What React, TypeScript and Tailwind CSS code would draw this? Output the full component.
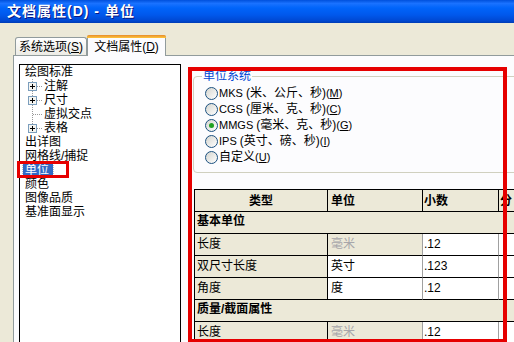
import React from "react";

const FONT = "font-['Liberation_Sans','Noto_Sans_CJK_SC',sans-serif]";

function Gutter({ plus, last }: { plus?: boolean; last?: boolean }) {
  return (
    <svg width="19" height="14" className="shrink-0 block">
      <line x1="7.5" y1="0" x2="7.5" y2={last ? 7.5 : 14} stroke="#9A9A9A" strokeDasharray="1 1" />
      <line x1="8" y1="7.5" x2="18" y2="7.5" stroke="#9A9A9A" strokeDasharray="1 1" />
      {plus && (
        <g shapeRendering="crispEdges">
          <rect x="3.5" y="3.5" width="8" height="8" fill="#F4F4F0" stroke="#7B9EBD" />
          <line x1="5" y1="7.5" x2="10" y2="7.5" stroke="#000" />
          <line x1="7.5" y1="5" x2="7.5" y2="10" stroke="#000" />
        </g>
      )}
    </svg>
  );
}

function U({ c }: { c: string }) {
  return <span className="underline underline-offset-[1px]">{c}</span>;
}

function L({ children }: { children: React.ReactNode }) {
  return <span className="text-[11px]">{children}</span>;
}

function Radio({ checked, children }: { checked?: boolean; children: React.ReactNode }) {
  return (
    <div className="flex items-center h-[16px]">
      <span className="w-[13px] h-[13px] rounded-full border border-[#1C5180] bg-[linear-gradient(135deg,#D4D4CE,#FFFFFF)] flex items-center justify-center shrink-0">
        {checked && <span className="w-[5px] h-[5px] rounded-full bg-[#21A121]" />}
      </span>
      <span className="ml-[1px] whitespace-nowrap leading-[14px]">{children}</span>
    </div>
  );
}

const hdr = "h-[22px] bg-[#ECE9D8] font-bold flex items-center border-b border-black";

export default function App() {
  return (
    <div className={`relative w-[514px] h-[342px] overflow-hidden bg-[#ECE9D8] text-[12px] text-black ${FONT}`}>
      {/* Title bar */}
      <div className="h-[23px] flex items-center pl-[7px] bg-[linear-gradient(180deg,#0050DC_0%,#1A72FF_15%,#0064FA_35%,#0058EC_65%,#0048D2_90%,#003CB4_100%)]">
        <span className="text-white font-bold text-[14px] tracking-[1px] [text-shadow:1px_1px_#0A1883] whitespace-nowrap">
          文档属性(D) - 单位
        </span>
      </div>

      {/* Tabs */}
      <div className="h-[32px] flex items-end pl-[15px]">
        <div className="h-[18px] w-[72px] border border-b-0 border-[#919B9C] rounded-t-[3px] bg-[linear-gradient(180deg,#FFFFFF,#ECEBE5)] flex items-center justify-center whitespace-nowrap leading-[14px]">
          系统选项(<U c="S" />)
        </div>
        <div className="relative z-10 -mb-px h-[21px] w-[79px] border-x border-[#919B9C] rounded-t-[3px] bg-[#FCFCFE] flex flex-col">
          <div className="h-[3px] rounded-t-[2px] bg-[linear-gradient(180deg,#E68B2C,#FFC73C)] -mx-px" />
          <div className="flex-1 flex items-center justify-center whitespace-nowrap leading-[14px]">
            文档属性(<U c="D" />)
          </div>
        </div>
      </div>

      {/* Panel */}
      <div className="ml-[13px] h-[300px] border-l border-t border-[#919B9C] bg-[#FCFCFE] flex items-start">
        {/* Tree */}
        <div className="mt-[8px] ml-[5px] w-[162px] h-[300px] border border-black bg-white pl-[5px] leading-[14px] shrink-0">
          <div className="h-[14px]">绘图标准</div>
          <div className="h-[14px] flex"><Gutter plus />注解</div>
          <div className="h-[14px] flex"><Gutter plus />尺寸</div>
          <div className="h-[14px] flex"><Gutter />虚拟交点</div>
          <div className="h-[14px] flex"><Gutter plus last />表格</div>
          <div className="h-[14px]">出详图</div>
          <div className="h-[14px]">网格线/捕捉</div>
          <div className="h-[14px] flex items-center">
            <span className="-ml-[2px] h-[13px] pl-[2px] pr-[4px] bg-[#316AC5] text-white outline outline-1 outline-dotted outline-[#C0C0C0] leading-[13px]">单位</span>
          </div>
          <div className="h-[14px]">颜色</div>
          <div className="h-[14px]">图像品质</div>
          <div className="h-[14px]">基准面显示</div>
        </div>

        {/* Right content */}
        <div className="ml-[12px] mt-[13px] w-[360px] shrink-0">
          <fieldset className="w-[340px] border border-[#D0D0BF] rounded-[4px] pl-[11px] pt-[2px] pb-[7px]">
            <legend className="-ml-[3px] px-[1px] text-[#0046D5] leading-[14px]">单位系统</legend>
            <Radio><L>MKS </L>(米、公斤、秒)<L>(<U c="M" />)</L></Radio>
            <Radio><L>CGS </L>(厘米、克、秒)<L>(<U c="C" />)</L></Radio>
            <Radio checked><L>MMGS </L>(毫米、克、秒)<L>(<U c="G" />)</L></Radio>
            <Radio><L>IPS </L>(英寸、磅、秒)<L>(<U c="I" />)</L></Radio>
            <Radio>自定义<L>(<U c="U" />)</L></Radio>
          </fieldset>

          {/* Table */}
          <div className="mt-[16px] ml-[1px] border-t border-l border-black grid grid-cols-[133px_95px_76px_60px] leading-[14px]">
            <div className={`${hdr} justify-center border-r border-black`}>类型</div>
            <div className={`${hdr} pl-[3px] border-r border-[#A0A0A0] border-b-black`}>单位</div>
            <div className={`${hdr} pl-[1px] border-r border-[#A0A0A0] border-b-black`}>小数</div>
            <div className={`${hdr} pl-[1px] border-r border-[#A0A0A0] border-b-black`}>分</div>

            <div className="col-span-4 h-[22px] bg-[#ECE9D8] font-bold pl-[2px] pt-[2px] border-b border-black">基本单位</div>

            <div className="h-[22px] bg-[#ECE9D8] pl-[2px] pt-[3px] border-r border-b border-black">长度</div>
            <div className="h-[22px] bg-[#ECE9D8] pl-[3px] pt-[3px] text-[#A7A6AA] border-r border-[#A0A0A0] border-b border-b-black">毫米</div>
            <div className="h-[22px] bg-white pl-[1px] pt-[3px] border-r border-[#A0A0A0] border-b border-b-black">.12</div>
            <div className="h-[22px] bg-white border-r border-[#A0A0A0] border-b border-b-black" />

            <div className="h-[22px] bg-[#ECE9D8] pl-[2px] pt-[3px] border-r border-b border-black">双尺寸长度</div>
            <div className="h-[22px] bg-white pl-[3px] pt-[3px] border-r border-[#A0A0A0] border-b border-b-black">英寸</div>
            <div className="h-[22px] bg-white pl-[1px] pt-[3px] border-r border-[#A0A0A0] border-b border-b-black">.123</div>
            <div className="h-[22px] bg-white border-r border-[#A0A0A0] border-b border-b-black" />

            <div className="h-[22px] bg-[#ECE9D8] pl-[2px] pt-[3px] border-r border-b border-black">角度</div>
            <div className="h-[22px] bg-white pl-[3px] pt-[3px] border-r border-[#A0A0A0] border-b border-b-black">度</div>
            <div className="h-[22px] bg-white pl-[1px] pt-[3px] border-r border-[#A0A0A0] border-b border-b-black">.12</div>
            <div className="h-[22px] bg-white border-r border-[#A0A0A0] border-b border-b-black" />

            <div className="col-span-4 h-[22px] bg-[#ECE9D8] font-bold pl-[2px] pt-[2px] border-b border-black">质量/截面属性</div>

            <div className="h-[22px] bg-[#ECE9D8] pl-[2px] pt-[3px] border-r border-b border-black">长度</div>
            <div className="h-[22px] bg-[#ECE9D8] pl-[3px] pt-[3px] text-[#A7A6AA] border-r border-[#A0A0A0] border-b border-b-black">毫米</div>
            <div className="h-[22px] bg-white pl-[1px] pt-[3px] border-r border-[#A0A0A0] border-b border-b-black">.12</div>
            <div className="h-[22px] bg-white border-r border-[#A0A0A0] border-b border-b-black" />
          </div>
        </div>
      </div>

      {/* Red annotation boxes */}
      <div className="absolute left-[188px] top-[67px] w-[319px] h-[276px] border-[4px] border-[#E60000] pointer-events-none" />
      <div className="absolute left-[17px] top-[161px] w-[52px] h-[17px] border-[3px] border-[#E60000] pointer-events-none" />
    </div>
  );
}
